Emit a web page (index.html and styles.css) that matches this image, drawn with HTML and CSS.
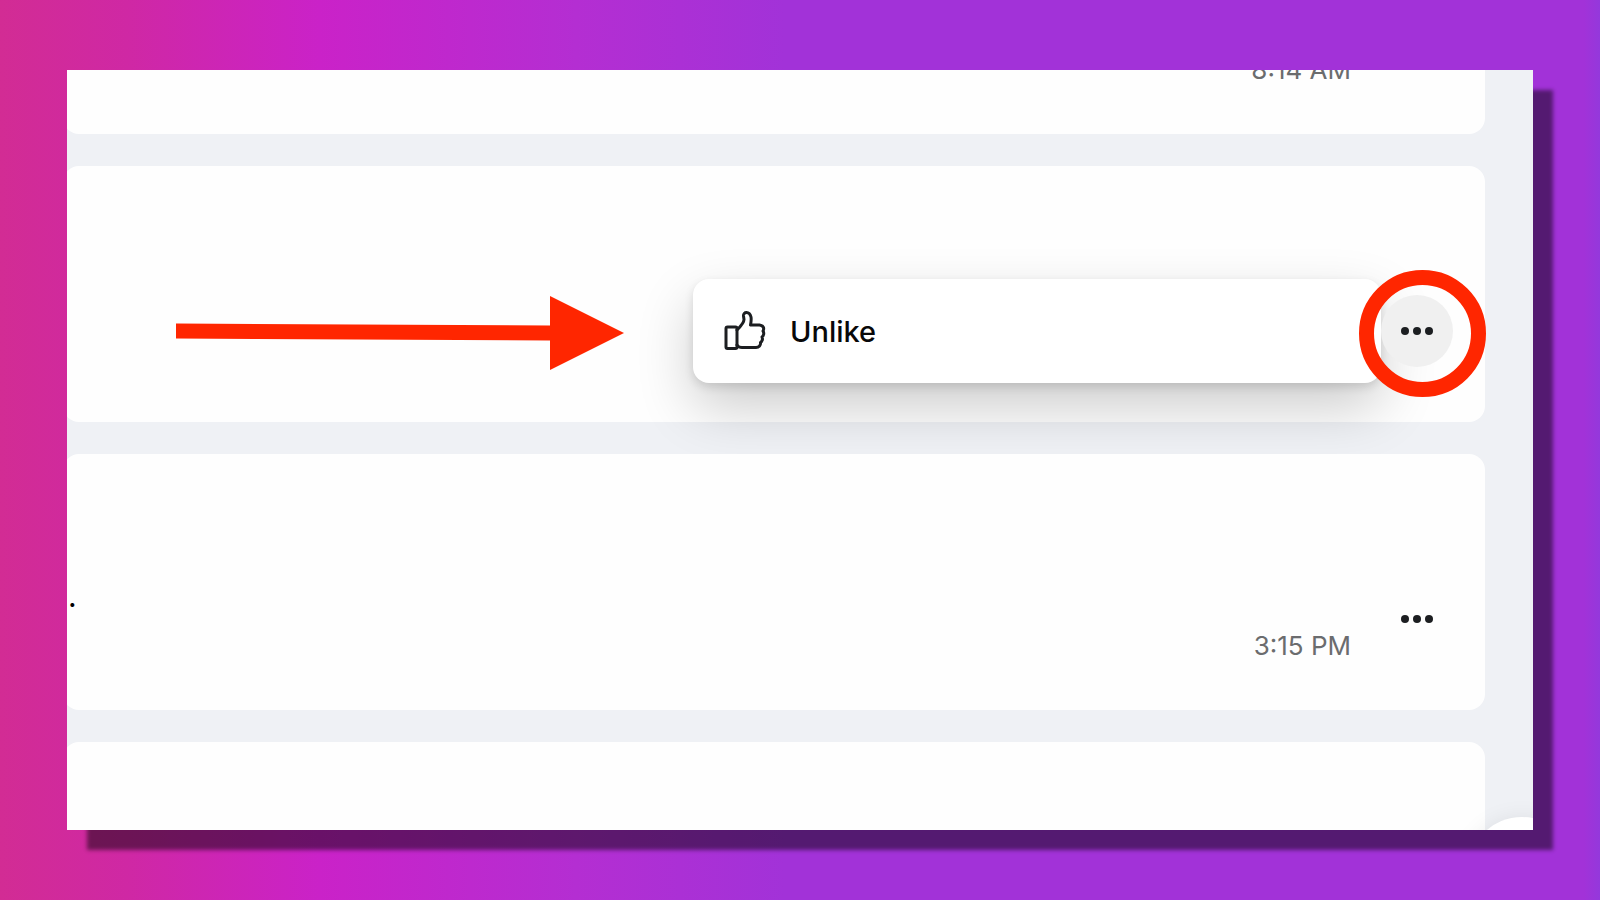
FILE: index.html
```html
<!DOCTYPE html>
<html lang="en">
<head>
<meta charset="utf-8">
<title>Activity log</title>
<link rel="stylesheet" href="styles.css">
</head>
<body>
<main class="frame">
  <article class="card card-first">
    <div class="body"></div>
    <time class="time">8:14 AM</time>
    <button class="more" type="button" aria-label="More options">
      <svg width="32" height="8" viewBox="0 0 32 8"><circle cx="4" cy="4" r="4"/><circle cx="16" cy="4" r="4"/><circle cx="28" cy="4" r="4"/></svg>
    </button>
  </article>
  <article class="card">
    <div class="body">
      <svg class="arrow" width="450" height="76" viewBox="0 0 450 76" aria-hidden="true"><path d="M0 28.500 374 30.500V1L448 38 374 75V45.500L0 43.500z"/></svg>
    </div>
    <div class="menu">
      <button class="menu-item" type="button">
        <svg class="thumb" width="42" height="42" viewBox="0 0 42 42" aria-hidden="true">
          <path d="M3.500 17h8a1.500 1.500 0 0 1 1.500 1.500v18.500a1.500 1.500 0 0 1-1.500 1.500h-8a1.500 1.500 0 0 1-1.500-1.500v-18.500a1.500 1.500 0 0 1 1.500-1.500z"/>
          <path d="M13 20C16 17 20 12 20 9.500L19.500 6C19 1.500 25.500 1 27 7C27.500 10 27 12.500 26.500 15H35.500C39.500 15.500 40.500 18.500 39 21C40.500 23 39.500 26 38 27C39 29.500 38 31.500 36.500 32.500C37 35 35 37.500 32 37.500H18C15.500 37.500 14 36.500 13 35"/>
        </svg>
        <span>Unlike</span>
      </button>
    </div>
    <button class="more more-active" type="button" aria-label="More options">
      <svg width="32" height="8" viewBox="0 0 32 8"><circle cx="4" cy="4" r="4"/><circle cx="16" cy="4" r="4"/><circle cx="28" cy="4" r="4"/></svg>
      <span class="ring"></span>
    </button>
  </article>
  <article class="card card-above">
    <div class="body"><p class="text">.</p></div>
    <time class="time">3:15 PM</time>
    <button class="more" type="button" aria-label="More options">
      <svg width="32" height="8" viewBox="0 0 32 8"><circle cx="4" cy="4" r="4"/><circle cx="16" cy="4" r="4"/><circle cx="28" cy="4" r="4"/></svg>
    </button>
  </article>
  <article class="card"></article>
  <button class="compose" type="button" aria-label="New message"></button>
</main>
</body>
</html>
```

FILE: styles.css
```css
* { box-sizing: border-box; }
body {
  position: relative;
  margin: 0;
  height: 100vh;
  padding: 70px 67px;
  display: flex;
  font-family: Inter, "Liberation Sans", sans-serif;
  background: linear-gradient(90deg, #d22c94 0%, #cf28a4 8%, #ca22c8 20%, #b42ed2 36%, #a232d8 49%, #a232d8 99%, #9438dc 100%);
}
body::before {
  content: "";
  position: absolute;
  inset: 70px 67px;
  box-shadow: 20px 20px 4px rgba(0, 0, 0, .48);
}
button { font: inherit; border: 0; padding: 0; background: none; }
.frame {
  flex: 1;
  position: relative;
  overflow: hidden;
  display: flex;
  flex-direction: column;
  gap: 32px;
  padding-right: 48px;
  background: #eff1f5;
}
.card {
  flex: none;
  height: 256px;
  margin-left: -4px;
  padding-right: 32px;
  display: flex;
  align-items: center;
  border-radius: 16px;
  background: #fefefe;
}
.card-first { margin-top: -192px; }
.card-above { position: relative; z-index: 2; }
.body { flex: 1; }
.arrow { display: block; margin: 78px 0 0 113px; fill: #ff2600; }
.text { margin: 0 0 0 5px; padding-top: 28px; font-size: 30px; line-height: 36px; }
.time {
  margin-right: 30px;
  padding-top: 128px;
  font-size: 26px;
  line-height: 32px;
  color: #6b6c6e;
}
.more {
  position: relative;
  width: 72px;
  height: 72px;
  margin-top: 73px;
  display: grid;
  place-items: center;
  border-radius: 50%;
  fill: #1c1e21;
}
.more-active { background: #f0f0f0; }
.ring {
  position: absolute;
  inset: -25px -33px -30px -22px;
  border: 15px solid #ff2600;
  border-radius: 50%;
}
.menu {
  width: 688px;
  margin-top: 74px;
  border-radius: 16px;
  background: #fff;
  box-shadow: 0 24px 56px rgba(0, 0, 0, .2), 0 4px 10px rgba(0, 0, 0, .12);
}
.menu-item {
  width: 100%;
  height: 104px;
  padding-left: 31px;
  display: flex;
  align-items: center;
  gap: 24px;
  font-size: 29px;
  font-weight: 500;
  color: #080809;
}
.thumb { fill: none; stroke: #1c1e21; stroke-width: 3; stroke-linejoin: round; stroke-linecap: round; }
.compose {
  position: absolute;
  right: -43px;
  bottom: -95px;
  width: 108px;
  height: 108px;
  border-radius: 50%;
  background: #fff;
  box-shadow: 0 4px 24px rgba(0, 0, 0, .1);
}
```
